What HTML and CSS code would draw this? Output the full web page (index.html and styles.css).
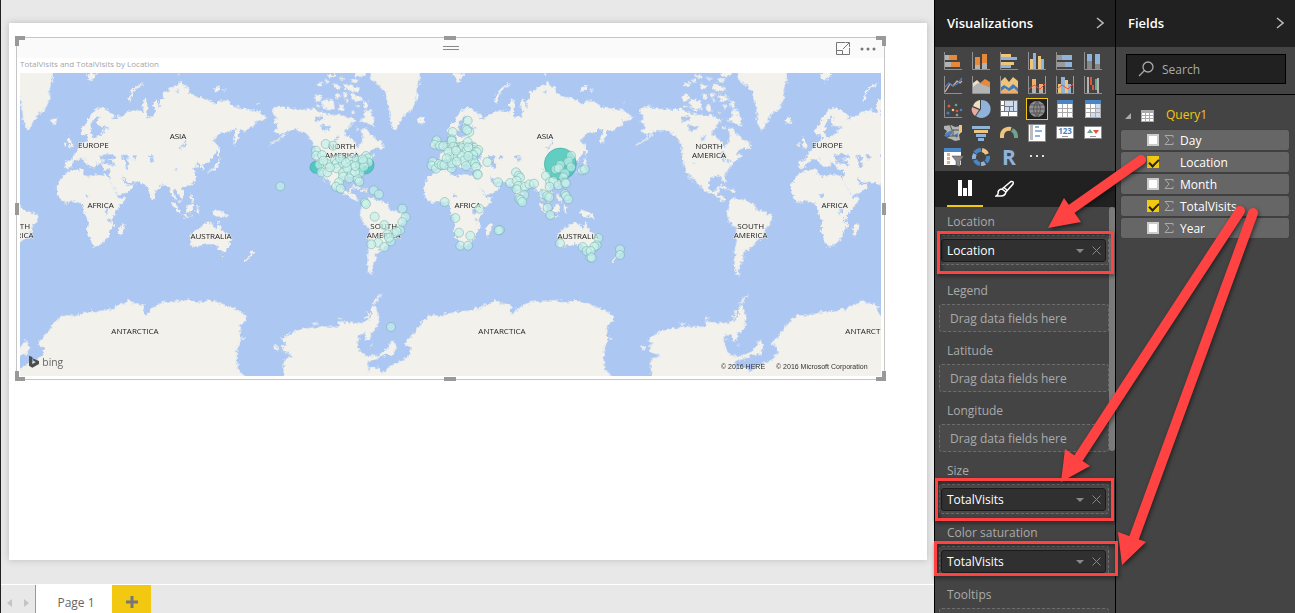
FILE: index.html
```html
<!DOCTYPE html>
<html lang="en">
<head>
<meta charset="utf-8">
<title>Report editor</title>
<link rel="stylesheet" href="styles.css">
</head>
<body>
<div class="app">
  <main class="workspace">
    <div class="canvas">
      <section class="page">
        <article class="visual">
          <i class="handle corner tl"></i><i class="handle corner tr"></i><i class="handle corner bl"></i><i class="handle corner br"></i>
          <i class="handle bar top"></i><i class="handle bar bottom"></i><i class="handle side left"></i><i class="handle side right"></i>
          <header class="visual-bar">
            <span class="grip"></span>
            <div class="visual-actions">
              <button type="button" aria-label="Focus mode"><svg width="15" height="13" viewBox="0 0 15 13" fill="none" stroke="#777"><path d="M9 .5H.5V12.500H13.500V6M.5 8.500H6.500V12.500M7 7L13 1M9.500 .5H13.500V5"/></svg></button>
              <button type="button" aria-label="More options"><svg width="16" height="4" viewBox="0 0 16 4" fill="#777"><circle cx="2" cy="2" r="1.500"/><circle cx="8" cy="2" r="1.500"/><circle cx="14" cy="2" r="1.500"/></svg></button>
            </div>
          </header>
          <h2 class="visual-title">TotalVisits and TotalVisits by Location</h2>
          <svg class="map" viewBox="60 219 2583 909" role="img" aria-label="World map of visits">
            <defs>
              <filter id="coast" color-interpolation-filters="sRGB" filterUnits="userSpaceOnUse" x="0" y="180" width="2700" height="980"><feTurbulence type="fractalNoise" baseFrequency=".1" numOctaves="3" seed="4"/><feDisplacementMap in="SourceGraphic" scale="17" xChannelSelector="R" yChannelSelector="G"/></filter>
              <g id="world">
                <g class="land" transform="translate(0 90)">
                  <path d="M194 413V393L216 391 220 373 232 362 240 350 248 340 262 332 266 325 260 308 268 300 274 320 285 324 298 312 312 310 306 300 314 296 330 294 318 290 300 288 292 284 290 275 300 262 290 260 280 272 274 285 276 298 266 312 256 316 244 314 242 298 256 282 268 262 282 242 300 232 312 236 330 246 345 258 335 266 345 268 352 262 372 255 380 246 408 240 432 248 428 232 430 210 438 206 444 228 440 262 462 258 468 245 458 225 468 205 480 235 478 210 490 205 488 188 505 180 525 165 536 165 540 150 548 165 565 172 568 190 590 200 620 205 635 215 650 225 655 212 680 212 700 228 740 238 775 240 785 255 800 262 785 275 765 272 770 285 750 292 735 305 718 300 716 325 700 348 700 322 710 298 700 295 690 305 665 308 636 334 655 345 650 368 632 390 608 405 612 420 604 418 600 402 585 400 595 412 580 414 590 440 580 458 560 468 545 472 555 492 545 505 535 492 528 480 518 480 525 500 532 512 520 505 510 480 500 462 485 465 470 480 465 500 457 513 445 480 438 465 420 458 400 455 385 458 370 440 372 455 385 466 402 463 395 478 380 488 356 497 345 480 330 455 328 445 330 420 310 418 302 402 318 400 332 402 345 410 338 395 318 385 302 400 292 402 282 385 290 400 285 412 270 410 256 385 250 380 262 395 268 405 258 402 245 385 235 388 222 395 214 410 200 415Z"/>
                  <path d="M205 425 235 418H252L250 430 270 440 290 432 320 436 328 450 345 482 358 504 375 502 372 515 350 540 334 570 343 585 328 604 325 622 300 646 280 650 270 625 260 600 265 570 250 545 248 522 215 512 200 520 185 515 172 490 170 470 185 440Z"/>
                  <path d="M372 579 374 590 366 612 358 618 356 600 362 586ZM515 515 530 525 545 550 535 548 520 530ZM545 554 580 560 560 564ZM558 530 575 522 580 532 572 548 558 546ZM590 528 602 530 594 534 600 550 590 548ZM535 510 548 514 540 520ZM570 490 580 505 586 520 576 512 568 500ZM636 545 650 540 672 548 684 565 666 560 650 560 638 552Z"/>
                  <path d="M572 610 590 598 604 590 612 582 625 577 640 582 642 592 650 594 656 575 666 600 680 610 692 625 688 648 676 664 660 664 648 645 625 642 605 646 575 652 570 625ZM664 675 674 678 668 684ZM756 660 764 668 745 686 736 698 734 692 750 676Z"/>
                  <path d="M654 385 660 395 655 410 640 422 622 428 636 418 648 405ZM653 360 655 350 660 360 658 382 654 376ZM206 318 214 335 222 352 205 356 210 340 202 330ZM192 342 200 338 198 350 190 350ZM150 268 168 262 176 272 165 283 152 276ZM390 222 384 208 396 182 410 168 430 159 428 166 410 176 396 194 392 210ZM530 130 540 132 536 140ZM258 130 292 130 286 140 278 148 272 158 264 142ZM642 172 660 168 660 180 645 184ZM666 178 682 180 672 184ZM768 220 778 218 774 224ZM805 345 830 330 855 312 858 315 830 334 808 348Z"/>
                </g>
                <g class="water" transform="translate(0 90)"><path d="M298 380 316 372 340 374 348 384 335 386 320 384 304 392ZM366 378 378 374 388 382 380 390 388 402 382 418 372 410 374 396ZM398 376 410 376 406 388 398 386ZM442 376 464 376 460 382 442 382ZM450 386 462 386 458 394 450 392ZM536 354 550 344 556 332 560 334 552 350 540 357ZM255 495 266 494 270 502 260 502ZM318 538 328 536 326 548 316 552 316 542ZM324 560 330 565 332 580 326 572ZM522 184 540 182 536 190ZM524 414 532 414 532 418 524 418Z"/></g>
                <g class="land" transform="translate(870 90)">
                  <path d="M236 110H390L390 150 380 180 382 205 375 220 365 240 345 252 330 275 320 299 308 296 300 270 298 240 292 215 285 185 265 165 245 150Z"/>
                </g>
                <g class="land" transform="translate(669 90)">
                  <path d="M148 245 150 235 175 228 200 236 240 238 270 236 300 248 330 255 362 255 376 262 390 268 380 290 368 300 368 318 385 325 398 340 402 354 414 340 420 315 414 298 430 292 440 315 455 320 462 335 480 350 455 354 436 372 455 372 450 385 425 400 415 420 403 436 408 462 400 454 390 438 370 440 355 455 358 480 375 485 385 470 390 472 384 492 400 500 405 516 390 508 370 495 350 485 330 470 310 445 292 428 304 450 312 462 300 448 285 420 277 395 275 350 262 325 245 308 215 300 195 305 170 315 155 305 165 285 150 275 162 265Z"/>
                  <path d="M276 198 288 190 298 202 292 214 276 214ZM296 216 308 208 332 212 335 236 316 242 300 232ZM282 222 292 226 290 236 280 230ZM384 190 400 198 414 200 418 212 398 214 386 204ZM420 210 436 222 434 236 422 232ZM426 240 446 240 446 256 458 265 450 275 456 290 440 284 424 276 408 270 425 262ZM396 222 412 228 404 236ZM392 124H432L420 138 408 142 396 138ZM382 146 404 148 402 158 384 156ZM366 164 380 162 394 170 408 174 404 184 380 184 368 176ZM282 160 300 155 298 168 282 168ZM304 148 318 150 312 162ZM330 162 352 164 350 178 336 174ZM340 190 352 194 346 210 338 204ZM360 188 376 190 370 202 362 200ZM364 206 376 208 372 218ZM348 222 362 225 364 244 348 240ZM384 244 396 246 390 254ZM316 135 336 136 330 144 318 142ZM352 136 364 148 354 150ZM384 262 398 270 390 280ZM398 290 410 294 402 302ZM385 462 400 468 412 474 404 478 390 470ZM414 478 436 478 430 486 416 484ZM475 330 460 340 462 356 482 355Z"/>
                  <path d="M420 510 435 503 460 510 494 522 500 540 524 546 547 556 546 570 530 590 520 620 498 632 482 655 465 662 458 676 460 690 448 708 446 725 452 738 440 732 433 710 435 660 440 630 438 596 418 575 410 554 415 530Z"/>
                </g>
                <g class="water" transform="translate(669 90)"><path d="M274 260 298 260 298 272 276 276ZM294 284 312 288 326 290 318 298 298 302ZM334 324 348 316 342 332ZM386 380 404 384 400 392ZM398 366 410 382 404 390 390 372ZM410 388 424 392 414 398ZM310 396 316 400 310 402Z"/></g>
                <g class="land" transform="translate(669 600)">
                  <path d="M185 545 180 480 210 468 182 455 176 440 190 430 174 418 210 395 240 386 300 380 345 380 348 364 400 370 436 362 446 345 446 322 456 316 468 348 466 376 452 396 428 402 405 405 403 440 425 467 460 468 490 448 510 420 520 440 512 465 490 462 468 474 437 485 434 498 448 545ZM428 400H444V420L425 422ZM152 436 164 440 166 450 156 450ZM344 350 360 356 348 358ZM266 366 290 372 276 376ZM448 312 462 290 480 280 466 294 456 314ZM432 330 442 340 436 356 424 354 434 346ZM408 412 418 418 410 420ZM440 434 450 430 444 440Z"/>
                </g>
                <g class="land" transform="translate(0 600)">
                  <path d="M110 432 140 400 165 365 190 345 220 347 270 335 320 330 326 322 332 330 350 315 370 311 385 299 395 308 434 315 430 330 438 346 450 328 465 318 490 306 530 302 563 300 600 306 630 300 665 310 700 325 722 336 741 350 735 365 720 380 722 405 722 425 712 440 710 480 716 510 735 530V545H5L8 500 38 505 48 518 68 498 108 480 131 462 130 442ZM726 412 738 416 728 420Z"/>
                </g>
              </g>
              <g id="names">
                <text x="280" y="443">EUROPE</text><text x="534" y="416">ASIA</text><text x="302" y="623">AFRICA</text><text x="633" y="718">AUSTRALIA</text><text x="405" y="1001">ANTARCTICA</text><text x="1026" y="447">NORTH</text><text x="1026" y="473">AMERICA</text><text x="1151" y="688">SOUTH</text><text x="1151" y="714">AMERICA</text>
              </g>
            </defs>
            <rect class="water" x="60" y="219" width="2583" height="909"/>
            <g filter="url(#coast)"><use href="#world" x="-1101"/><use href="#world"/><use href="#world" x="1101"/><use href="#world" x="2202"/></g>
            <g class="names"><use href="#names" x="-1101"/><use href="#names"/><use href="#names" x="1101"/><use href="#names" x="2202"/></g>
            <g class="bubbles" id="bubbles" transform="translate(870 90)"></g>
            <path fill="#4d4d4d" d="M87 1067 97 1071V1092L107 1086 101 1083 97 1075 117 1083V1092L97 1103 87 1097Z"/>
            <text class="bing" x="127" y="1098">bing</text>
            <text class="credit" x="2163" y="1108">© 2016 HERE</text><text class="credit" x="2328" y="1108">© 2016 Microsoft Corporation</text>
          </svg>
        </article>
      </section>
    </div>
    <nav class="page-tabs" aria-label="Pages">
      <div class="pager"><button type="button" aria-label="Previous page"><svg width="5" height="8"><path fill="#c4c4c4" d="M5 0V8L0 4Z"/></svg></button><button type="button" aria-label="Next page"><svg width="5" height="8"><path fill="#c4c4c4" d="M0 0V8L5 4Z"/></svg></button></div>
      <button type="button" class="page-tab">Page 1</button>
      <button type="button" class="add-page" aria-label="New page"><svg width="12" height="12"><path stroke="#777" stroke-width="3" d="M6 0V12M0 6H12"/></svg></button>
    </nav>
  </main>

  <aside class="panel">
    <header class="panel-head"><h2>Visualizations</h2><button type="button" aria-label="Collapse Visualizations"><svg width="8" height="12" fill="none" stroke="#bbb" stroke-width="1.500"><path d="M1 1 7 6 1 11"/></svg></button></header>
    <div class="gallery">
      <button type="button" aria-label="Stacked bar chart"><svg viewBox="0 0 18 18"><path fill="#e8893a" d="M5 3h8v5H5zM7 10h9v5H7z"/><path fill="#b3b3b3" d="M1 3h4v5H1zM1 10h6v5H1z"/><path class="ax" d="M.5 0V17.500H18"/></svg></button>
      <button type="button" aria-label="Stacked column chart"><svg viewBox="0 0 18 18"><path fill="#e8893a" d="M3 5h5v8H3zM10 2h5v9h-5z"/><path fill="#b3b3b3" d="M3 13h5v4H3zM10 11h5v6h-5z"/><path class="ax" d="M.5 0V17.500H18"/></svg></button>
      <button type="button" aria-label="Clustered bar chart"><svg viewBox="0 0 18 18"><path fill="#efc47c" d="M1 2h10v3H1zM1 10h13v3H1z"/><path fill="#8fb3d9" d="M1 5h16v3H1zM1 13h10v3H1z"/><path class="ax" d="M.5 0V17.500H18"/></svg></button>
      <button type="button" aria-label="Clustered column chart"><svg viewBox="0 0 18 18"><path fill="#efc47c" d="M2 7h3v10H2zM10 4h3v13h-3z"/><path fill="#8fb3d9" d="M5 1h3v16H5zM13 7h3v10h-3z"/><path class="ax" d="M.5 0V17.500H18"/></svg></button>
      <button type="button" aria-label="100% stacked bar chart"><svg viewBox="0 0 18 18"><path fill="#8fb3d9" d="M6 3h10v5H6zM9 10h7v5H9z"/><path fill="#999" d="M1 3h5v5H1zM1 10h8v5H1z"/><path class="ax" d="M.5 0V17.500H18"/></svg></button>
      <button type="button" aria-label="100% stacked column chart"><svg viewBox="0 0 18 18"><path fill="#8fb3d9" d="M3 2h5v10H3zM11 2h5v10h-5z"/><path fill="#888" d="M3 9h5v8H3zM11 12h5v5h-5z"/><path class="ax" d="M.5 0V17.500H18"/></svg></button>
      <button type="button" aria-label="Line chart"><svg viewBox="0 0 18 18" fill="none"><path stroke="#e7aaa0" stroke-width="1.300" d="M1 16 6 8l3 2 4-5 3 2 2-2"/><path stroke="#4a80bd" stroke-width="1.300" d="M1 11 5 7l4 3 4-2 5-6"/><path class="ax" d="M.5 0V17.500H18"/></svg></button>
      <button type="button" aria-label="Area chart"><svg viewBox="0 0 18 18"><path fill="#eddfc1" d="M1 7 5 4l5 5-9 3z"/><path fill="#e8893a" d="M7 8 13 3l5 3v5z"/><path fill="#b3b3b3" d="M1 11 6 7l12 4v6H1z"/><path class="ax" d="M.5 0V17.500H18"/></svg></button>
      <button type="button" aria-label="Stacked area chart"><svg viewBox="0 0 18 18"><path fill="#efc47c" d="M0 6 5 1l4 5 4-5 5 4v7H0z"/><path fill="#3a7cc0" d="M0 12 4 9l5 3 4-4 5 4v5H0z"/><path fill="#efad6c" d="M1 15 5 12l4 3 5-3 4 4v1H1z"/><path class="ax" d="M.5 0V17.500H18"/></svg></button>
      <button type="button" aria-label="Line and stacked column chart"><svg viewBox="0 0 18 18"><path fill="#efad6c" d="M4 3h4v14H4zM11 8h4v9h-4z"/><path fill="#b3b3b3" d="M4 12h4v5H4zM11 13h4v4h-4z"/><path stroke="#e0553d" fill="none" d="M1 13 6 9l6 4 5-5"/><path class="ax" d="M.5 0V17.500H18"/><path stroke="#e8893a" d="M17.500 0V17"/></svg></button>
      <button type="button" aria-label="Line and clustered column chart"><svg viewBox="0 0 18 18"><path fill="#efc47c" d="M2 8h3v9H2zM9 4h3v13H9z"/><path fill="#8fb3d9" d="M5 1h4v16H5zM12 8h3v9h-3z"/><path stroke="#e0553d" fill="none" d="M1 13 6 9l6 4 5-5"/><path class="ax" d="M.5 0V17.500H18"/><path stroke="#e8893a" d="M17.500 0V17"/></svg></button>
      <button type="button" aria-label="Waterfall chart"><svg viewBox="0 0 18 18"><path fill="#b3b3b3" d="M3 1h2v16H3zM13 2h2v15h-2z"/><path fill="#e0553d" d="M6 1h2v8H6zM8 9h2v5H8z"/><path fill="#70a28f" d="M11 3h2v11h-2z"/><path class="ax" d="M.5 0V17.500H18"/></svg></button>
      <button type="button" aria-label="Scatter chart"><svg viewBox="0 0 18 18"><path class="ax" d="M.5 0V17.500H18"/><g fill="#e0553d"><circle cx="5" cy="6" r="1.500"/><circle cx="13" cy="11" r="1.300"/></g><g fill="#4a80bd"><circle cx="4" cy="13" r="1.500"/><circle cx="17" cy="10" r="1.300"/></g><circle fill="#70a28f" cx="12" cy="5" r="1.300"/><circle fill="#efc47c" cx="9" cy="10" r="1.300"/><circle fill="#999" cx="13" cy="15" r="1.300"/></svg></button>
      <button type="button" aria-label="Pie chart"><svg viewBox="0 0 18 18"><path fill="#8fb3d9" d="M9 0A9 9 0 1 1 4 16L9 9Z"/><path fill="#eddfc1" d="M8 0A9 9 0 0 0 1 6L8 9Z"/><path fill="#e7aaa0" d="M0 7 7 10 3 16A9 9 0 0 1 0 7Z"/></svg></button>
      <button type="button" aria-label="Treemap"><svg viewBox="0 0 18 18"><path fill="#777" d="M0 0H18V17H0z"/><path fill="#fff" d="M1 1h3v4H1zM1 6h3v5H1zM1 12h7v4H1zM9 12h8v4H9z"/><path fill="#cddcf0" d="M5 1h8v5H5zM14 1h3v10h-3zM5 7h4v4H5zM10 7h3v4h-3z"/></svg></button>
      <button type="button" class="picked" aria-label="Map" aria-pressed="true"><svg viewBox="0 0 18 18"><circle cx="9" cy="9" r="8" fill="#8f8f8f"/><path fill="none" stroke="#555" d="M9 1V17M1 9H17M3 5H15M3 13H15M9 1Q2 9 9 17Q16 9 9 1"/></svg></button>
      <button type="button" aria-label="Table"><svg viewBox="0 0 18 18"><path fill="#fff" d="M1 0h16v18H1z"/><path fill="#4a86c5" d="M1 0h16v4H1z"/><path stroke="#aaa" fill="none" d="M1.500 4V17.500H16.500V4M1 8.500H17M1 12.500H17M6.500 4V17M11.500 4V17"/></svg></button>
      <button type="button" aria-label="Matrix"><svg viewBox="0 0 18 18"><path fill="#fff" d="M1 0h16v18H1z"/><path fill="#cddcf0" d="M12 4h5v9h-5zM7 13h10v4H7z"/><path fill="#4a86c5" d="M1 0h16v4H1z"/><path stroke="#aaa" fill="none" d="M1.500 4V17.500H16.500V4M1 8.500H17M1 12.500H17M6.500 4V17M11.500 4V17"/></svg></button>
      <button type="button" aria-label="Filled map"><svg viewBox="0 0 18 18"><path fill="#b3b3b3" d="M0 2 7 1l4 2 6-1v6l-2 3 1 5-5 1-4-2-4-1 3-2-5-2 2-3-3-2z"/><path fill="#4a80bd" d="M2 9l6-3v4l-5 3-3-1zM10 11l4-2-1 5z"/><path fill="#efc47c" d="M15 1h3v7l-3 2z"/><path stroke="#555" fill="none" d="M6 1l2 5h7M9 6v6M4 12h10"/></svg></button>
      <button type="button" aria-label="Funnel"><svg viewBox="0 0 18 18"><path fill="#8fb3d9" d="M0 2h18v3H0zM4 10h10v3H4zM6 14h6v3H6z"/><path fill="#efc47c" d="M2 6h14v3H2z"/></svg></button>
      <button type="button" aria-label="Gauge"><svg viewBox="0 0 18 18" fill="none" stroke-width="4"><path stroke="#efc47c" d="M2 14V12A7 7 0 0 1 11 5"/><path stroke="#70a28f" d="M12 6A7 7 0 0 1 16 12V14"/></svg></button>
      <button type="button" aria-label="Multi-row card"><svg viewBox="0 0 18 18"><path fill="#fff" stroke="#888" d="M.5 .5h17v17H.5z"/><path fill="#bbb" d="M2 1h3v15H2z"/><path fill="#8fb3d9" d="M7 2h4v2H7zM7 6h7v2H7zM7 11h5v2H7z"/></svg></button>
      <button type="button" aria-label="Card"><svg viewBox="0 0 18 18"><path fill="#fff" stroke="#888" d="M.5 2.500h17v12H.5z"/><text x="9" y="10" text-anchor="middle" class="num">123</text><path stroke="#999" d="M6 12.500H12"/></svg></button>
      <button type="button" aria-label="KPI"><svg viewBox="0 0 18 18"><path fill="#fff" stroke="#888" d="M.5 2.500h17v12H.5z"/><path fill="#70a28f" d="M3 9 6 5 9 9z"/><path fill="#e0553d" d="M9 6h6l-3 4z"/><path stroke="#999" d="M6 12.500H12"/></svg></button>
      <button type="button" aria-label="Slicer"><svg viewBox="0 0 18 18"><path fill="#fff" d="M0 0h17v17H0z"/><path fill="#4a86c5" d="M0 0h17v4H0z"/><path fill="#efad6c" d="M3 5h3v3H3zM3 9h3v3H3zM3 13h3v3H3z"/><path fill="#888" stroke="#444" stroke-width=".5" d="M8 8h12l-4 5v6l-4-2v-4z"/></svg></button>
      <button type="button" aria-label="Donut chart"><svg viewBox="0 0 18 18" fill="none" stroke-width="4"><path stroke="#4a86c5" d="M3 5A7 7 0 0 1 9 2M16 8A7 7 0 0 1 14 14M8 16A7 7 0 0 1 3 12"/><path stroke="#efc47c" d="M10 2A7 7 0 0 1 15 6"/><path stroke="#8fb3d9" d="M2 11A7 7 0 0 1 3 6M9 16A7 7 0 0 0 13 15"/></svg></button>
      <button type="button" class="script-visual" aria-label="R script visual">R</button>
      <button type="button" aria-label="More visuals"><svg viewBox="0 0 18 18"><path fill="#ddd" d="M2 7h2v2H2zM8 7h2v2H8zM14 7h2v2h-2z"/></svg></button>
    </div>
    <div class="modes">
      <button type="button" class="on" aria-label="Fields"><svg width="16" height="17"><path fill="#fff" d="M1 0h4v16H1zM6 8h4v8H6zM11 0h4v16h-4z"/></svg></button>
      <button type="button" aria-label="Format"><svg width="20" height="18" fill="none" stroke="#fff" stroke-width="1.500"><path d="M7 9 16 1.500Q19 1 18 4L11 12ZM7 9 11 12Q10 16 6 16H1Q4 14 3 12Q4 9 7 9M9 7.500 12.500 10.500"/></svg></button>
    </div>
    <div class="wells">
      <section class="well tall"><h3>Location</h3><div class="drop"><div class="chip"><span>Location</span><button type="button" aria-label="Location menu"><svg width="8" height="4"><path fill="#888" d="M0 0H8L4 4Z"/></svg></button><button type="button" aria-label="Remove Location"><svg width="9" height="9" stroke="#888"><path d="M.5 .5 8.500 8.500M8.500 .5 .5 8.500"/></svg></button></div></div></section>
      <section class="well"><h3>Legend</h3><div class="drop empty">Drag data fields here</div></section>
      <section class="well"><h3>Latitude</h3><div class="drop empty">Drag data fields here</div></section>
      <section class="well"><h3>Longitude</h3><div class="drop empty">Drag data fields here</div></section>
      <section class="well"><h3>Size</h3><div class="drop"><div class="chip"><span>TotalVisits</span><button type="button" aria-label="Size menu"><svg width="8" height="4"><path fill="#888" d="M0 0H8L4 4Z"/></svg></button><button type="button" aria-label="Remove size"><svg width="9" height="9" stroke="#888"><path d="M.5 .5 8.500 8.500M8.500 .5 .5 8.500"/></svg></button></div></div></section>
      <section class="well"><h3>Color saturation</h3><div class="drop"><div class="chip"><span>TotalVisits</span><button type="button" aria-label="Color saturation menu"><svg width="8" height="4"><path fill="#888" d="M0 0H8L4 4Z"/></svg></button><button type="button" aria-label="Remove color saturation"><svg width="9" height="9" stroke="#888"><path d="M.5 .5 8.500 8.500M8.500 .5 .5 8.500"/></svg></button></div></div></section>
      <section class="well"><h3>Tooltips</h3><div class="drop empty"></div></section>
      <i class="scroll-thumb"></i>
    </div>
  </aside>

  <aside class="panel">
    <header class="panel-head"><h2>Fields</h2><button type="button" aria-label="Collapse Fields"><svg width="8" height="12" fill="none" stroke="#bbb" stroke-width="1.500"><path d="M1 1 7 6 1 11"/></svg></button></header>
    <div class="search-row"><label class="search"><svg width="16" height="16" fill="none" stroke="#aaa" stroke-width="1.300"><circle cx="10" cy="6" r="5"/><path d="M6.500 9.500 1 15"/></svg><input type="search" placeholder="Search" aria-label="Search fields"></label></div>
    <div class="tree">
      <div class="table-row"><svg width="6" height="6"><path fill="#aaa" d="M6 0V6H0Z"/></svg><svg width="13" height="12"><path fill="#aaa" d="M0 0H13V12H0z"/><path fill="#fff" d="M1 3h3v2H1zM5 3h3v2H5zM9 3h3v2H9zM1 6h3v2H1zM5 6h3v2H5zM9 6h3v2H9zM1 9h3v2H1zM5 9h3v2H5zM9 9h3v2H9z"/></svg><span>Query1</span></div>
      <label class="field"><input type="checkbox"><svg class="sigma" viewBox="0 0 16 10"><path d="M9 2.500V.5H1L5 5 1 9.500H9V7.500"/></svg><span>Day</span></label>
      <label class="field"><input type="checkbox" checked><i class="sigma"></i><span>Location</span></label>
      <label class="field"><input type="checkbox"><svg class="sigma" viewBox="0 0 16 10"><path d="M9 2.500V.5H1L5 5 1 9.500H9V7.500"/></svg><span>Month</span></label>
      <label class="field"><input type="checkbox" checked><svg class="sigma" viewBox="0 0 16 10"><path d="M9 2.500V.5H1L5 5 1 9.500H9V7.500"/></svg><span>TotalVisits</span></label>
      <label class="field"><input type="checkbox"><svg class="sigma" viewBox="0 0 16 10"><path d="M9 2.500V.5H1L5 5 1 9.500H9V7.500"/></svg><span>Year</span></label>
    </div>
  </aside>

  <svg class="notes" viewBox="930 0 365 613" aria-hidden="true">
    <g fill="none" stroke="#ff4343" stroke-width="3"><path d="M938.500 232.500h174v40h-174zM936.500 479.500h176v40h-176zM935.500 542.500h181v32h-181z"/></g>
    <g stroke="#ff4343" stroke-width="10" stroke-linecap="round"><path d="M1141 160 1070 210M1240 211 1076 462M1253 213 1134 538"/></g>
    <path fill="#ff4343" d="M1048 228 1064 198 1081 222ZM1061 482 1065 449 1090 466ZM1122 565 1118 532 1146 542Z"/>
  </svg>
</div>
<script src="bubbles.js"></script>
</body>
</html>
```
FILE: bubbles.js
```js
// Bubble centres by region, as "x,y" or "x,y,radius".
const points = `
-29,469 78,412,18 225,405,27 107,342 129,347 78,362 78,377 96,375 88,404 94,427 112,402 112,427 135,390 140,400 159,400 140,415 159,428 180,390 185,405 200,388 210,402 228,378 235,385 235,398 210,428 185,430 159,440 178,445 203,447 208,455 147,457 138,470 152,476 195,426 220,395
120,412 172,414 196,408 222,410 100,392 150,385 168,398 218,388
251,481 267,493 225,518 228,522 254,560 337,536 347,561 337,576 283,585 330,601 312,610 292,613 320,605 302,634 297,623 264,638 244,643 283,651 303,891
533,272 527,296 538,306 531,300 488,306 485,328 440,331 434,344 450,347 472,348 485,332 505,350 520,348 533,336 549,350 565,360 560,366 549,374 530,362 480,380 490,380 503,380 515,378 549,390 540,395 522,392 528,408 555,400 558,411 485,415 428,395 425,407 438,416 447,402 455,405 463,405 485,400 592,396 562,432 563,434
460,348 490,350 535,352 475,365 498,362 470,385 535,378 500,395
624,457 660,459 678,427 686,437 690,443 680,452 685,468 680,478 705,470 718,463 732,461 703,495 688,507 692,510 697,516
464,516 568,536 496,564 507,608 541,617 511,647 534,647 630,600 626,601
811,402,48 843,377 835,395 843,412 811,405 797,418 806,415 768,437 825,430 820,442 780,455 790,453 779,470 805,466 825,458 828,460 760,493 772,498 778,502 825,492 828,498 835,508 876,421 884,418 773,533 781,555
810,640 878,651 890,663 901,682 925,624 920,646 913,650 902,663 905,683 990,658 990,675`;
const layer = document.getElementById("bubbles");
for (const p of points.trim().split(/\s+/)) {
  const [x, y, r = 13.5] = p.split(",").map(Number);
  const c = document.createElementNS("http://www.w3.org/2000/svg", "circle");
  c.setAttribute("cx", x);
  c.setAttribute("cy", y);
  c.setAttribute("r", r);
  if (r > 14) c.setAttribute("class", "big");
  layer.append(c);
}
```
FILE: styles.css
```css
* { box-sizing: border-box; }
body { margin: 0; font-family: "Open Sans", "Noto Sans", sans-serif; font-size: 12px; color: #fff; }
h2, h3 { margin: 0; font-weight: 400; font-size: 12px; }
button { border: 0; padding: 0; background: none; color: inherit; font: inherit; display: flex; align-items: center; justify-content: center; }
svg { display: block; flex: none; }
.app { position: relative; display: flex; height: 100vh; overflow: hidden; }

.workspace { flex: 1; min-width: 0; display: flex; flex-direction: column; background: #e8e8e8; border-left: 1px solid #222; }
.canvas { flex: 1; min-height: 0; padding: 23px 7px 24px 8px; border-bottom: 1px solid #fff; }
.page { height: 100%; background: #fff; padding: 14px 42px 0 7px; box-shadow: 0 0 7px #bbb; }
.visual { position: relative; border: 1px solid #c6c6c6; }
.visual-bar { position: relative; display: flex; justify-content: center; align-items: center; height: 20px; background: #fafafa; }
.grip { width: 16px; height: 4px; border: solid #888; border-width: 1px 0; }
.visual-actions { position: absolute; right: 8px; top: 4px; display: flex; gap: 9px; }
.visual-title { padding-left: 3px; height: 15px; line-height: 12px; font-size: 8px; color: #a5a5a5; }
.map { width: calc(100% - 6px); margin: 0 3px 3px; }
.handle { position: absolute; background: #999; z-index: 1; }
.corner { width: 10px; height: 10px; background: none; border: 0 solid #999; }
.tl { left: -2px; top: -2px; border-width: 4px 0 0 4px; }
.tr { right: -2px; top: -2px; border-width: 4px 4px 0 0; }
.bl { left: -2px; bottom: -2px; border-width: 0 0 4px 4px; }
.br { right: -2px; bottom: -2px; border-width: 0 4px 4px 0; }
.bar { width: 12px; height: 4px; left: calc(50% - 7px); }
.side { width: 4px; height: 12px; top: calc(50% - 6px); }
.top { top: -2px; } .bottom { bottom: -2px; } .left { left: -2px; } .right { right: -2px; }

.land { fill: #f2f1ec; }
.water { fill: #acc7f2; }
.names { font-size: 24px; fill: #222; text-anchor: middle; stroke: #f2f1ec; stroke-width: 3px; paint-order: stroke; }
.bubbles circle { fill: #c4f0ea; fill-opacity: .66; stroke: #68a69c; stroke-opacity: .7; stroke-width: 2px; }
.bubbles .big { fill: #3cc5b6; fill-opacity: .8; stroke: #279b8d; }
.bing { font-size: 31px; fill: #666; }
.credit { font: 21px "Liberation Sans", sans-serif; fill: #333; }

.page-tabs { display: flex; height: 28px; color: #666; }
.pager { display: flex; justify-content: center; gap: 12px; width: 35px; padding-top: 8px; border-right: 1px solid #999; }
.page-tab { width: 76px; padding: 6px 0 0 4px; background: #fff; }
.add-page { width: 39px; padding-top: 5px; background: #f2c811; }

.panel { width: 181px; flex: none; display: flex; flex-direction: column; background: #444; border-left: 1px solid #000; }
.panel + .panel { width: 180px; }
.panel-head { flex: none; display: flex; align-items: center; justify-content: space-between; height: 47px; padding: 0 11px 2px 12px; background: #212121; }
.panel-head h2 { font-size: 13px; font-weight: 600; }
.gallery { display: grid; grid-template-columns: repeat(6, 22px); gap: 2px 6px; height: 124px; padding: 3px 0 0 7px; align-content: start; flex: none; }
.gallery button { width: 22px; height: 22px; }
.gallery svg { width: 18px; height: 18px; overflow: visible; }
.ax { fill: none; stroke: #909090; }
.num { font-size: 8px; font-weight: 700; fill: #4a80bd; }
.gallery .picked { background: #212121; border: 1px solid #f2c811; outline: 1px solid #f2c811; outline-offset: -1px; }
.gallery .script-visual { font-size: 21px; font-weight: 700; color: #8fb3d9; }
.modes { flex: none; display: flex; gap: 4px; height: 36px; padding-left: 12px; background: #212121; }
.modes button { width: 36px; }
.modes .on { border-bottom: 2px solid #f2c811; }
.wells { position: relative; flex: 1; min-height: 0; overflow: hidden; padding: 2px 6px 0 4px; }
.well { padding-bottom: 6px; }
.well h3 { height: 26px; line-height: 26px; padding-left: 8px; color: #aaa; }
.drop { height: 30px; padding: 3px 2px 3px 1px; border: 1px dashed #6c6c6c; border-radius: 3px; background: #4a4a4a; }
.tall { padding-bottom: 13px; }
.empty { height: 28px; padding: 0 10px; line-height: 27px; color: #aaa; }
.chip { display: flex; align-items: center; gap: 8px; height: 23px; padding: 0 4px 0 5px; background: #303030; border: 1px solid #1c1c1c; border-radius: 3px; }
.chip span { flex: 1; }
.scroll-thumb { position: absolute; right: 0; top: 0; width: 6px; height: 244px; border-radius: 3px; background: #7a7a7a; }

.search-row { flex: none; height: 48px; padding: 7px 9px 0 10px; border-bottom: 1px solid #000; }
.search { display: flex; align-items: center; gap: 8px; height: 30px; padding-left: 11px; background: #212121; border: 1px solid #000; }
.search input { flex: 1; min-width: 0; border: 0; padding: 0; outline: 0; background: none; color: #fff; font: inherit; }
.search input::placeholder { color: #aaa; }
.tree { display: flex; flex-direction: column; gap: 2px; padding: 8px 6px 0 5px; }
.table-row { display: flex; align-items: center; height: 25px; padding-left: 4px; gap: 10px; color: #f2c811; }
.table-row span { padding: 0 0 2px 2px; }
.field { display: flex; align-items: center; height: 20px; padding-left: 26px; background: #666; border-radius: 2px; box-shadow: 0 0 1px #222; }
.field input { appearance: none; width: 12px; height: 12px; margin: 0 5px 0 0; background: #fff; border: 2px solid #ccc; }
.field input:checked { border-color: #f2c811; background: #f2c811; display: grid; place-items: center; }
.field input:checked::before { content: ""; width: 8px; height: 4px; border: solid #222; border-width: 0 0 2px 2px; rotate: -45deg; }
.sigma { width: 16px; height: 10px; fill: none; stroke: #aaa; }

.notes { position: absolute; top: 0; right: 0; width: 365px; height: 613px; pointer-events: none; filter: drop-shadow(1px 2px 2px #0008); }
```
